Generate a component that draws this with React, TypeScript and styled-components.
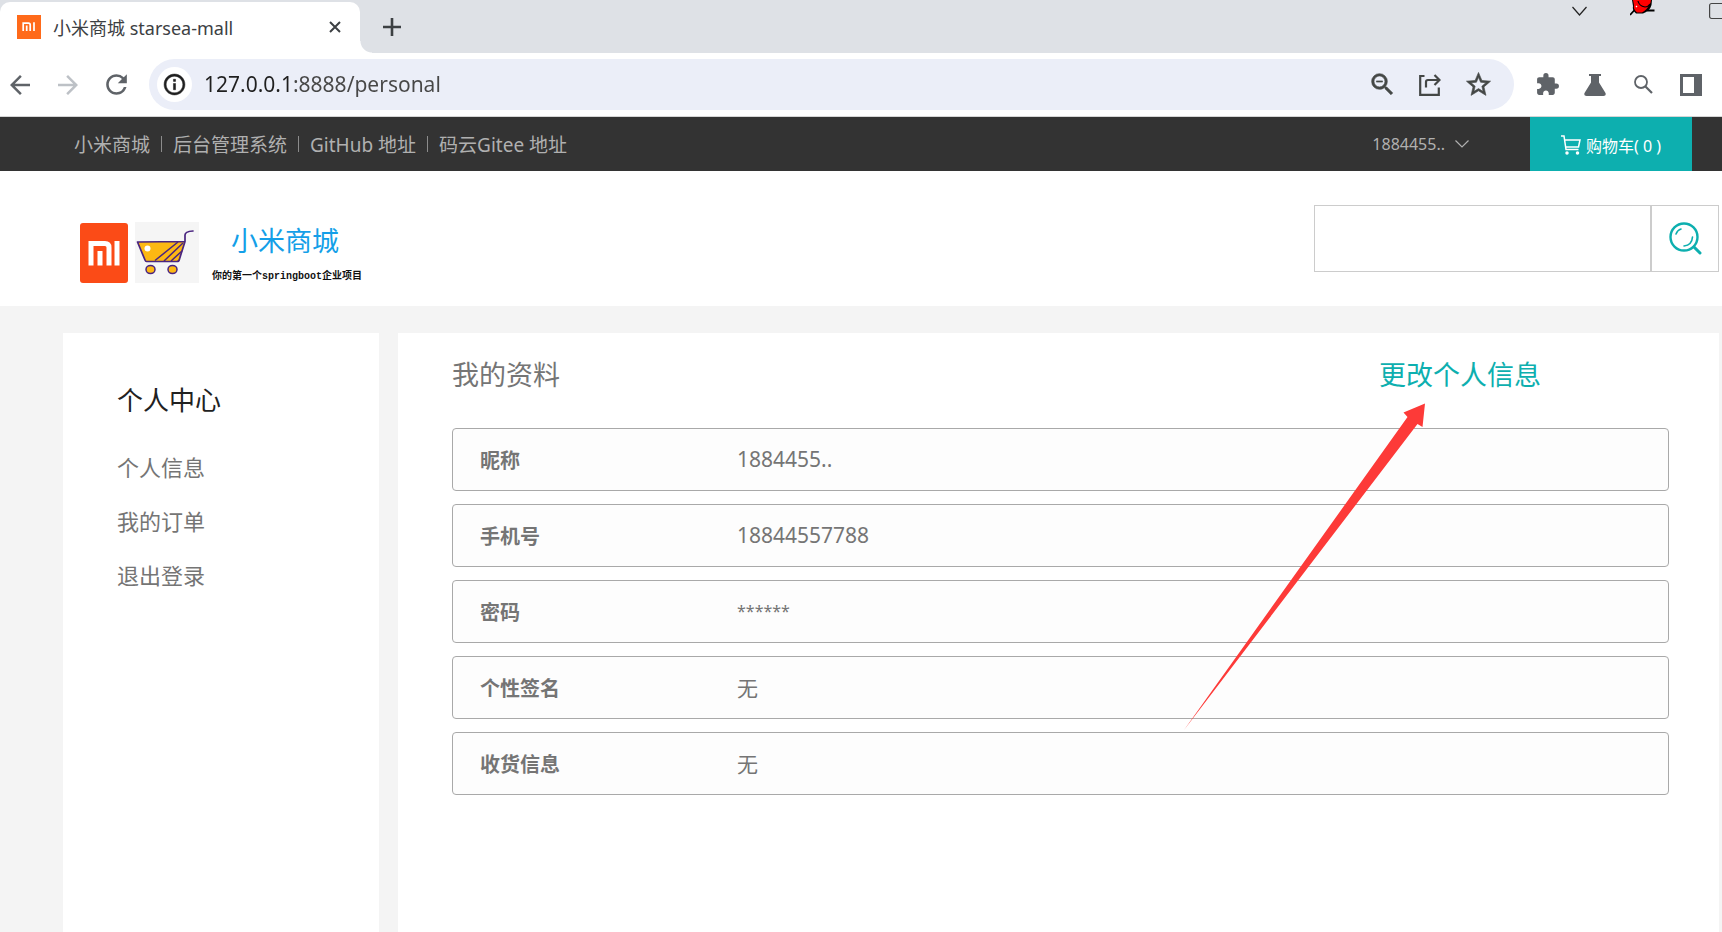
import React from "react";
import styled, { createGlobalStyle } from "styled-components";
import {
  MdArrowBack,
  MdArrowForward,
  MdRefresh,
  MdInfoOutline,
  MdZoomOut,
  MdStarOutline,
  MdExtension,
} from "react-icons/md";

const teal = "#0dafaf";
const grey = "#757575";

const GlobalStyle = createGlobalStyle`
  *, *::before, *::after { box-sizing: border-box; }
  body {
    margin: 0;
    background: #f4f4f4;
    color: ${grey};
    font-family: "Noto Sans", "Noto Sans CJK SC", sans-serif;
    font-size: 20px;
  }
  button, input { font: inherit; color: inherit; }
  button { border: 0; padding: 0; background: none; cursor: pointer; }
  a { color: inherit; text-decoration: none; }
  svg { display: block; flex: none; }
  h1, h2, ul, dl, dd { margin: 0; padding: 0; font-weight: 400; }
  li { list-style: none; }
`;

const Page = styled.div`
  min-height: 100vh;
  display: flex;
  flex-direction: column;
  overflow: hidden;
`;

/* ---------- browser chrome ---------- */

const TabStrip = styled.div`
  height: 53px;
  display: flex;
  align-items: stretch;
  background: #dee1e6;
`;

const Tab = styled.div`
  width: 360px;
  margin-top: 2px;
  padding: 0 18px 2px 17px;
  display: flex;
  align-items: center;
  gap: 12px;
  position: relative;
  background: #fff;
  border-radius: 10px 10px 0 0;
  color: #3c4043;
  font-size: 18px;

  &::after {
    content: "";
    position: absolute;
    left: 100%;
    bottom: 0;
    width: 12px;
    height: 12px;
    background: radial-gradient(circle at 100% 0, transparent 11px, #fff 12px);
  }
`;

const TabTitle = styled.span`
  flex: 1;
  white-space: nowrap;
`;

const IconButton = styled.button<{ $color?: string; $size?: number }>`
  width: ${(p) => p.$size ?? 30}px;
  height: ${(p) => p.$size ?? 30}px;
  display: flex;
  align-items: center;
  justify-content: center;
  flex: none;
  color: ${(p) => p.$color ?? "#5f6368"};
`;

const NewTab = styled.div`
  flex: 1;
  padding: 12px 0 0 17px;
`;

const WindowControls = styled.div`
  display: flex;
  align-items: flex-start;
  gap: 43px;
`;

const Toolbar = styled.div`
  height: 64px;
  padding: 0 16px 0 5px;
  display: flex;
  align-items: center;
  gap: 18px;
  background: #fff;
  border-bottom: 1px solid #d5d5d5;
`;

const AddressBar = styled.div`
  flex: 1;
  height: 51px;
  padding: 0 21px 0 8px;
  display: flex;
  align-items: center;
  gap: 18px;
  background: #ebeef8;
  border-radius: 26px;

  button svg { stroke-width: 0.5px; }
  button svg > path[fill="none"] { stroke: none; }
`;

const SiteInfo = styled(IconButton)`
  background: #fff;
  border-radius: 50%;
`;

const AddressInput = styled.input`
  flex: 1;
  min-width: 0;
  margin-left: -6px;
  padding: 0 0 1px;
  border: 0;
  outline: 0;
  font-size: 21px;
  line-height: 30px;
  background: linear-gradient(90deg, #1f1f1f 88px, #474747 88px);
  background-clip: text;
  -webkit-text-fill-color: transparent;
`;

/* ---------- shop top bar ---------- */

const TopBar = styled.div`
  height: 54px;
  padding: 0 30px 0 74px;
  display: flex;
  align-items: center;
  background: #333;
  color: #b0b0b0;
`;

const TopNav = styled.nav`
  flex: 1;
  display: flex;
  align-items: center;
  gap: 11px;
  font-size: 19px;
  white-space: nowrap;
`;

const Divider = styled.span`
  width: 1px;
  height: 16px;
  background: #8c8c8c;
`;

const UserButton = styled.button`
  margin-right: 61px;
  display: flex;
  align-items: center;
  gap: 10px;
  font-size: 16px;
`;

const CartLink = styled.a`
  width: 162px;
  height: 54px;
  padding-top: 1px;
  display: flex;
  align-items: center;
  justify-content: center;
  gap: 5px;
  background: ${teal};
  color: #fff;
  font-size: 16px;
  white-space: nowrap;
`;

/* ---------- header ---------- */

const Header = styled.header`
  height: 135px;
  padding: 34px 3px 0 80px;
  display: flex;
  align-items: flex-start;
  justify-content: space-between;
  background: #fff;
`;

const Brand = styled.a`
  margin-top: 17px;
  display: flex;
  align-items: flex-start;
`;

const Marks = styled.span`
  display: flex;
  align-items: flex-end;
  gap: 7px;
`;

const BrandText = styled.span`
  margin-left: 13px;
  display: flex;
  flex-direction: column;
  align-items: center;
`;

const BrandName = styled.span`
  padding-right: 4px;
  color: #149fe8;
  font-size: 27px;
  line-height: 38px;
`;

const Slogan = styled.span`
  color: #111;
  font-family: "Liberation Mono", "Noto Sans CJK SC", monospace;
  font-size: 10px;
  font-weight: 700;
  line-height: 34px;
`;

const SearchForm = styled.form`
  width: 405px;
  height: 67px;
  display: flex;
`;

const SearchInput = styled.input`
  flex: 1;
  min-width: 0;
  padding: 0 16px;
  border: 1px solid #ccc;
  background: #fff;
`;

const SearchButton = styled.button`
  width: 68px;
  display: flex;
  align-items: center;
  justify-content: center;
  border: 1px solid #ccc;
`;

/* ---------- personal centre ---------- */

const Main = styled.main`
  flex: 1;
  padding: 27px 3px 0 63px;
  display: flex;
  gap: 19px;
`;

const Sidebar = styled.aside`
  width: 316px;
  padding: 51px 54px 0;
  background: #fff;
`;

const SidebarTitle = styled.h2`
  margin-bottom: 24px;
  color: #212121;
  font-size: 26px;
  line-height: 32px;
`;

const MenuItem = styled.a`
  display: block;
  font-size: 22px;
  line-height: 54px;
`;

const Content = styled.section`
  flex: 1;
  padding: 26px 50px 0 54px;
  position: relative;
  background: #fff;
`;

const ContentHead = styled.div`
  margin-bottom: 37px;
  padding-right: 128px;
  display: flex;
  justify-content: space-between;
  font-size: 27px;
  line-height: 32px;
`;

const ContentTitle = styled.h1`
  font-size: 27px;
`;

const EditLink = styled.a`
  color: ${teal};
`;

const ProfileList = styled.dl`
  display: flex;
  flex-direction: column;
  gap: 13px;
`;

const ProfileRow = styled.div`
  height: 63px;
  padding: 0 27px 1px;
  display: flex;
  align-items: center;
  background: #fdfdfd;
  border: 1px solid #a9a9a9;
  border-radius: 4px;
`;

const FieldName = styled.dt`
  width: 257px;
  font-weight: 700;
`;

const FieldValue = styled.dd<{ $masked?: boolean }>`
  font-size: ${(p) => (p.$masked ? 16 : 21)}px;
`;

const Pointer = styled.svg`
  position: absolute;
  top: 70px;
  right: 293px;
  pointer-events: none;
`;

const MiMark = () => (
  <svg width="48" height="60" viewBox="0 0 48 60">
    <rect width="48" height="60" rx="3" fill="#fb4b17" />
    <path d="M11 42.5V20.5H25q4 0 4 4V42.5" fill="none" stroke="#fff" strokeWidth="5" />
    <path d="M20 28V42.5M37 18V42.5" stroke="#fff" strokeWidth="5" />
  </svg>
);

const Favicon = () => (
  <svg width="24" height="24" viewBox="0 0 24 24">
    <rect width="24" height="24" fill="#ff6a1a" />
    <path d="M6.200 16V8.200H11.500Q13.200 8.200 13.200 10V16" fill="none" stroke="#fff" strokeWidth="1.700" />
    <path d="M9.700 10.500V16M17 7.300V16" stroke="#fff" strokeWidth="1.700" />
  </svg>
);

const CartPicture = () => (
  <svg width="64" height="61" viewBox="0 0 64 61">
    <rect width="64" height="61" fill="#f5f5f5" />
    <path d="M2.500 20L50 19.500L44.500 37Q44 39.500 42 39.500H11.500Q10.500 39.500 10 38Z" fill="#fdb813" />
    <path d="M20 38.500L43 20M29 39L48 21M36 39L47 29" fill="none" stroke="#4a2580" strokeWidth="1.500" />
    <path
      d="M58 9Q50 9.500 50 13V19.500M2.500 20L50 19.500L44.500 37Q44 39.500 42 39.500H11.500Q10.500 39.500 10 38Z"
      fill="none"
      stroke="#4a2580"
      strokeWidth="1.700"
      strokeLinecap="round"
      strokeLinejoin="round"
    />
    <circle cx="12.500" cy="26.500" r="3" fill="#fff" />
    <ellipse cx="15.500" cy="47.500" rx="4.500" ry="4" fill="#fdb813" stroke="#4a2580" strokeWidth="1.500" />
    <ellipse cx="37.500" cy="47.500" rx="4.500" ry="4" fill="#fdb813" stroke="#4a2580" strokeWidth="1.500" />
  </svg>
);

const profile = [
  { name: "昵称", value: "1884455.." },
  { name: "手机号", value: "18844557788" },
  { name: "密码", value: "******", masked: true },
  { name: "个性签名", value: "无" },
  { name: "收货信息", value: "无" },
];

const topLinks = ["小米商城", "后台管理系统", "GitHub 地址", "码云Gitee 地址"];
const menu = ["个人信息", "我的订单", "退出登录"];

export default function App() {
  return (
    <>
      <GlobalStyle />
      <Page>
        <TabStrip>
          <Tab>
            <Favicon />
            <TabTitle>小米商城 starsea-mall</TabTitle>
            <IconButton $size={14} $color="#3c4043" aria-label="Close tab">
              <svg width="12" height="12" viewBox="0 0 12 12" stroke="currentColor" strokeWidth="2">
                <path d="M1 1L11 11M11 1L1 11" />
              </svg>
            </IconButton>
          </Tab>
          <NewTab>
            <IconButton $color="#3c4043" aria-label="New tab">
              <svg width="18" height="18" viewBox="0 0 18 18" stroke="currentColor" strokeWidth="2.600">
                <path d="M9 0V18M0 9H18" />
              </svg>
            </IconButton>
          </NewTab>
          <WindowControls>
            <svg width="15" height="16" viewBox="0 0 15 16" fill="none" stroke="#222" strokeWidth="1.200">
              <path d="M.5 7L7.500 15L14.500 7" />
            </svg>
            <svg width="36" height="16" viewBox="0 0 36 16">
              <path d="M0 15L5 9.500M17 10.500H24.500" stroke="#000" strokeWidth="1.800" />
              <path d="M2 0H22L21.500 5Q20 11 13 13.500H6Q2 10 3 6Z" fill="#000" />
              <path d="M3 0H21Q21 3 19 5Q17 10 12 12.500H7Q3 9 4 5Z" fill="#f00" />
              <path d="M8 1Q9 6 15 7Q18 7 20 4" fill="none" stroke="#000" strokeWidth="1.200" />
              <path d="M6 6L7 7" stroke="#fff" strokeWidth="1.200" />
            </svg>
            <svg width="13" height="20" viewBox="0 0 13 20" fill="none" stroke="#444" strokeWidth="1.200">
              <rect x=".6" y="3.500" width="16" height="15" rx="2" />
            </svg>
          </WindowControls>
        </TabStrip>

        <Toolbar>
          <IconButton aria-label="Back"><MdArrowBack size={30} /></IconButton>
          <IconButton $color="#bdc1c6" aria-label="Forward"><MdArrowForward size={30} /></IconButton>
          <IconButton aria-label="Reload"><MdRefresh size={31} /></IconButton>
          <AddressBar>
            <SiteInfo $size={35} $color="#1f1f1f" aria-label="Site information">
              <MdInfoOutline size={25} />
            </SiteInfo>
            <AddressInput aria-label="Address" defaultValue="127.0.0.1:8888/personal" />
            <IconButton $color="#444746" aria-label="Zoom"><MdZoomOut size={29} /></IconButton>
            <IconButton $color="#444746" aria-label="Share">
              <svg width="22" height="22" viewBox="0 0 22 22" fill="none" stroke="currentColor">
                <g strokeWidth="2.200">
                  <path d="M5.500 2H1.200V20.800H19.800V13.500" />
                  <path d="M7 13.500V8Q7 6 9 6H20M15.500 1L20.500 6L15.500 11" />
                </g>
              </svg>
            </IconButton>
            <IconButton $color="#444746" aria-label="Bookmark"><MdStarOutline size={29} /></IconButton>
          </AddressBar>
          <IconButton aria-label="Extensions"><MdExtension size={25} /></IconButton>
          <IconButton aria-label="Labs">
            <svg width="22" height="22" viewBox="0 0 22 22" fill="currentColor">
              <path d="M5 0H17V2H15V8.500L21.500 19Q22.500 22 19.500 22H2.500Q-.5 22 .5 19L7 8.500V2H5Z" />
            </svg>
          </IconButton>
          <IconButton aria-label="Search tabs">
            <svg width="19" height="19" viewBox="0 0 19 19" fill="none" stroke="currentColor">
              <circle cx="7" cy="7" r="6" strokeWidth="1.800" />
              <path d="M11.500 11.500L18 18" strokeWidth="2.200" />
            </svg>
          </IconButton>
          <IconButton aria-label="Side panel">
            <svg width="22" height="22" viewBox="0 0 22 22">
              <rect width="22" height="22" fill="#5f6368" />
              <rect x="3" y="3" width="11" height="16" fill="#fff" />
            </svg>
          </IconButton>
        </Toolbar>

        <TopBar>
          <TopNav>
            {topLinks.map((label, i) => (
              <React.Fragment key={label}>
                {i > 0 && <Divider />}
                <a href="#">{label}</a>
              </React.Fragment>
            ))}
          </TopNav>
          <UserButton>
            1884455..
            <svg width="14" height="8" viewBox="0 0 14 8" fill="none" stroke="currentColor" strokeWidth="1.200">
              <path d="M.5 .5L7 7L13.500 .5" />
            </svg>
          </UserButton>
          <CartLink href="#">
            <svg width="20" height="20" viewBox="0 0 20 20" fill="none" stroke="#fff" strokeWidth="1.500">
              <path d="M0 1H3L5 14.500H17.500M3.800 5H19L17.500 12H5" />
              <circle cx="6" cy="18" r="1" fill="#fff" />
              <circle cx="16.500" cy="18" r="1" fill="#fff" />
            </svg>
            购物车( 0 )
          </CartLink>
        </TopBar>

        <Header>
          <Brand href="#">
            <Marks>
              <MiMark />
              <CartPicture />
            </Marks>
            <BrandText>
              <BrandName>小米商城</BrandName>
              <Slogan>你的第一个springboot企业项目</Slogan>
            </BrandText>
          </Brand>
          <SearchForm>
            <SearchInput type="text" aria-label="搜索" />
            <SearchButton type="button" aria-label="搜索">
              <svg width="33" height="33" viewBox="0 0 33 33" fill="none" stroke={teal} strokeLinecap="round">
                <circle cx="15" cy="15" r="13.500" strokeWidth="2.400" />
                <path d="M25 25L31 31" strokeWidth="3" />
                <path d="M7 12Q8.500 8 12 7M23.500 15Q23 23 15 24" strokeWidth="1.600" />
              </svg>
            </SearchButton>
          </SearchForm>
        </Header>

        <Main>
          <Sidebar>
            <SidebarTitle>个人中心</SidebarTitle>
            <ul>
              {menu.map((label) => (
                <li key={label}>
                  <MenuItem href="#">{label}</MenuItem>
                </li>
              ))}
            </ul>
          </Sidebar>
          <Content>
            <ContentHead>
              <ContentTitle>我的资料</ContentTitle>
              <EditLink href="#">更改个人信息</EditLink>
            </ContentHead>
            <ProfileList>
              {profile.map((row) => (
                <ProfileRow key={row.name}>
                  <FieldName>{row.name}</FieldName>
                  <FieldValue $masked={row.masked}>{row.value}</FieldValue>
                </ProfileRow>
              ))}
            </ProfileList>
            <Pointer width="242" height="328" viewBox="0 0 242 328" fill="#fd3a38" aria-hidden="true">
              <path d="M0 327L223.500 14L219.500 9.500L241 .5L238.500 24L233.500 21Z" />
            </Pointer>
          </Content>
        </Main>
      </Page>
    </>
  );
}
